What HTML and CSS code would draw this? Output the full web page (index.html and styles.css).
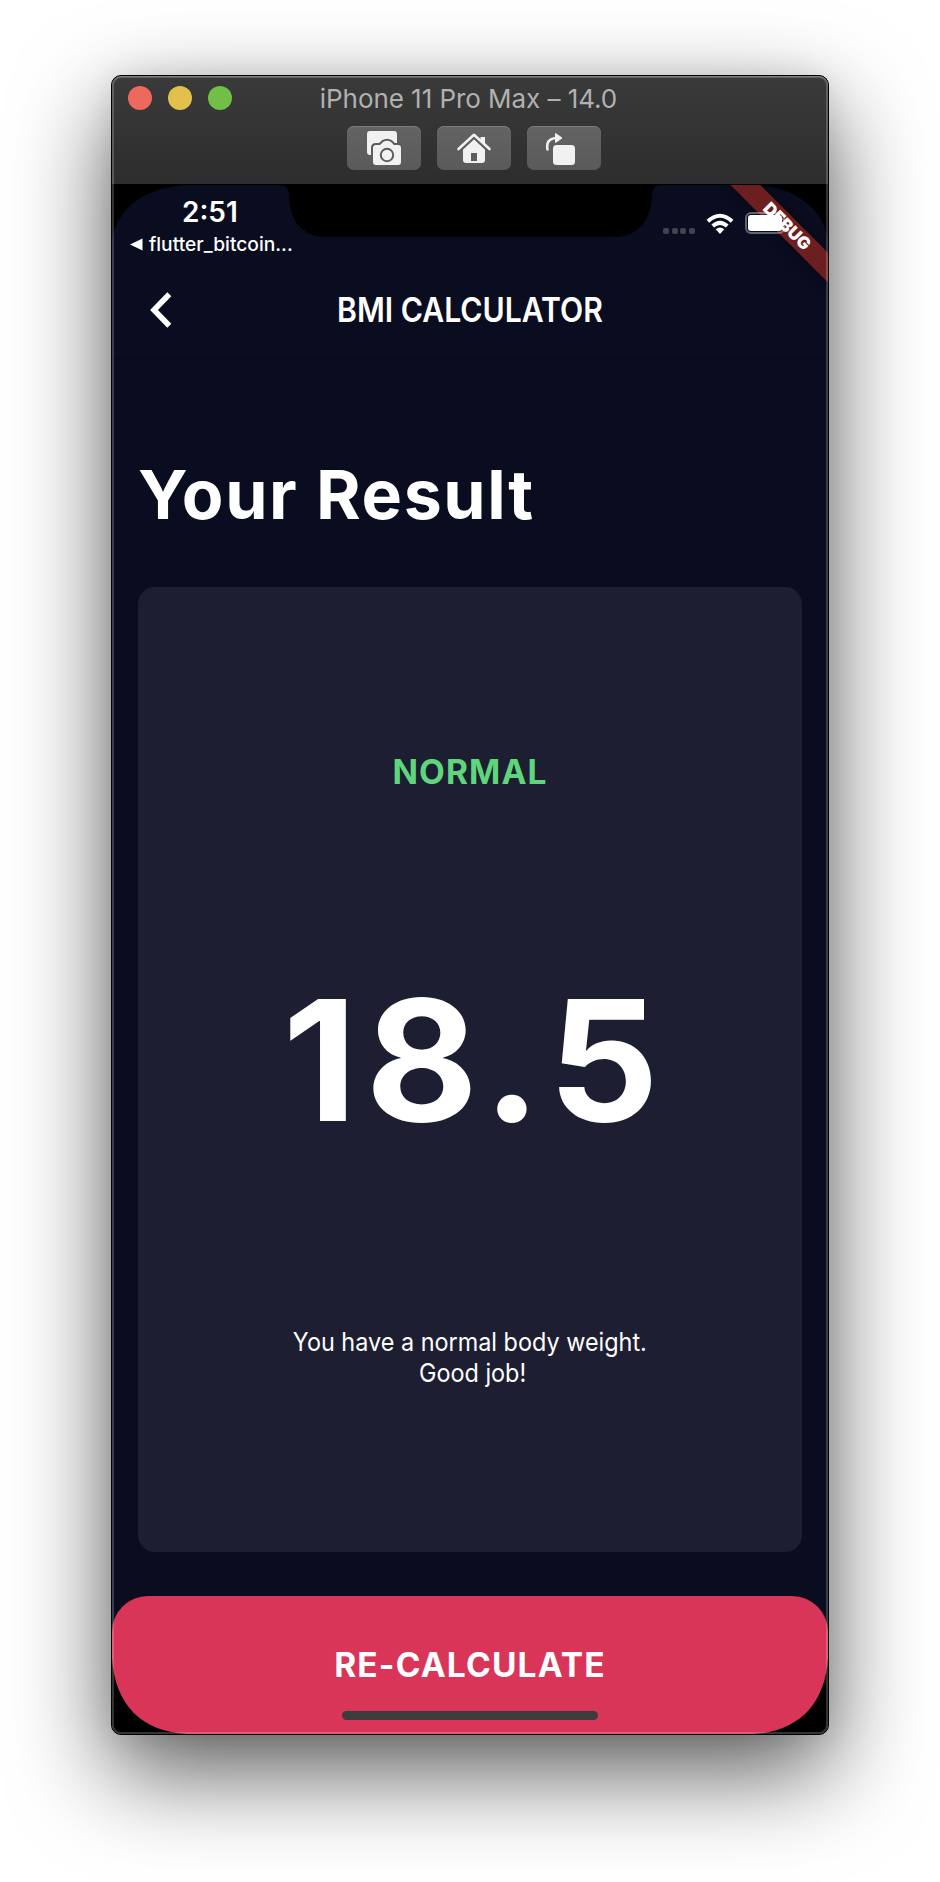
FILE: index.html
```html
<!DOCTYPE html>
<html lang="en">
<head>
<meta charset="utf-8">
<title>iPhone 11 Pro Max – 14.0</title>
<link rel="stylesheet" href="styles.css">
</head>
<body>
<main class="window">
  <header class="toolbar">
    <div class="titlebar">
      <div class="lights"><i class="light red"></i><i class="light yellow"></i><i class="light green"></i></div>
      <span class="window-title">iPhone 11 Pro Max – 14.0</span>
    </div>
    <div class="tools">
      <button class="tool" aria-label="Screenshot">
        <svg width="74" height="44" viewBox="0 0 74 44">
          <path fill="#f1f1f1" d="M23 5h24q3 0 3 3v14H24v7h-1q-3 0-3-3V8q0-3 3-3z"/>
          <path fill="#f1f1f1" stroke="#5c5c5c" stroke-width="4" paint-order="stroke" d="M29 19h4l3-3q4-2.500 8 0l3 3h4q3 0 3 3v14q0 3-3 3H29q-3 0-3-3V22q0-3 3-3z"/>
          <circle cx="40" cy="29" r="6.200" fill="none" stroke="#5c5c5c" stroke-width="2"/>
        </svg>
      </button>
      <button class="tool" aria-label="Home">
        <svg width="74" height="44" viewBox="0 0 74 44">
          <path fill="#f1f1f1" d="M26 22.500L37 12l11 10.500V34q0 3-3 3H29q-3 0-3-3z"/>
          <path d="M21.500 23L37 8.500 52.500 23" fill="none" stroke="#5c5c5c" stroke-width="5" transform="translate(0 1.500)"/>
          <path d="M21.500 23L37 8.800 52.500 23" fill="none" stroke="#f1f1f1" stroke-width="2.600" stroke-linecap="round" stroke-linejoin="round"/>
          <path fill="#f1f1f1" d="M43.500 11h4.500v8l-4.500-4z"/>
          <rect x="34" y="27" width="6" height="8" fill="#5c5c5c"/>
        </svg>
      </button>
      <button class="tool" aria-label="Rotate">
        <svg width="74" height="44" viewBox="0 0 74 44">
          <rect x="26" y="19" width="22" height="20" rx="3.500" fill="#f1f1f1"/>
          <path d="M20.500 23.500Q18.500 13 29 12" fill="none" stroke="#f1f1f1" stroke-width="2.600" stroke-linecap="round"/>
          <path d="M28.500 7.500L35 12l-6.500 4.500z" fill="#f1f1f1" stroke="#f1f1f1" stroke-linejoin="round"/>
        </svg>
      </button>
    </div>
  </header>
  <section class="screen">
    <div class="status">
      <div class="status-left">
        <span class="clock">2:51</span>
        <span class="back-app"><svg width="13" height="13" viewBox="0 0 13 13"><path d="M0 6.500L12.500 .5v12z" fill="#fff"/></svg><span class="back-name">flutter_bitcoin...</span></span>
      </div>
      <div class="status-right">
        <div class="dots"><i></i><i></i><i></i><i></i></div>
        <svg class="wifi" width="28" height="22" viewBox="0 0 28 22" fill="none" stroke="#fff" stroke-width="4">
          <path d="M1.900 8.300Q14-2.800 26.100 8.300"/><path d="M6.700 13.100Q14 6.600 21.300 13.100"/><path d="M9.700 16.300Q14 12.800 18.300 16.300L14 21z" fill="#fff" stroke="none"/>
        </svg>
        <div class="battery"><i></i></div>
      </div>
    </div>
    <div class="appbar">
      <svg width="22" height="36" viewBox="0 0 22 36"><path d="M19.300 2.200L4 18 19.300 33.800" fill="none" stroke="#fff" stroke-width="5.600"/></svg>
      <h1 class="app-title">BMI CALCULATOR</h1>
    </div>
    <div class="heading"><h2>Your Result</h2></div>
    <article class="card">
      <strong class="verdict">NORMAL</strong>
      <span class="score">18.5</span>
      <p class="advice">You have a normal body weight.<br><span class="praise">Good job!</span></p>
    </article>
    <button class="recalc"><span>RE-CALCULATE</span><i class="home-bar"></i></button>
    <svg class="bezel" width="716" height="1550" viewBox="0 0 716 1550">
      <path d="M0 0H716V57C711 22 680 1 635 1H549Q540 1 540 11C540 36 526 53 502 53H214C190 53 177 36 177 11Q177 1 168 1H81C36 1 5 22 0 57z"/>
      <path d="M0 1474C3 1521 30 1548 76 1550H0zM716 1474C713 1521 686 1548 640 1550H716z"/>
    </svg>
    <div class="ribbon-clip"><div class="ribbon">DEBUG</div></div>
  </section>
  <div class="glass-edge"></div>
</main>
</body>
</html>
```
FILE: styles.css
```css
* { box-sizing: border-box; }
body {
  margin: 0;
  height: 1882px;
  padding: 75px 111px 0;
  overflow: hidden;
  background: #fff;
  font-family: Inter, "Liberation Sans", sans-serif;
  color: #fff;
}
button { border: 0; padding: 0; font: inherit; color: inherit; }
h1, h2, p { margin: 0; }
.window {
  position: relative;
  width: 718px;
  height: 1660px;
  border: 1px solid #000;
  border-radius: 10px;
  background: #000;
  box-shadow: 0 36px 96px rgba(0, 0, 0, .66), 0 0 30px rgba(0, 0, 0, .08);
}
.glass-edge {
  position: absolute;
  inset: 0;
  border-radius: 9px;
  box-shadow: inset 0 0 0 2px rgba(255, 255, 255, .2), inset 0 1px 0 rgba(255, 255, 255, .2);
  pointer-events: none;
}
.toolbar {
  height: 108px;
  border-radius: 9px 9px 0 0;
  background: linear-gradient(#3a3a3a, #2d2d2d);
}
.titlebar { position: relative; height: 44px; display: flex; align-items: center; justify-content: center; padding-right: 3px; }
.lights { position: absolute; left: 16px; top: 10px; display: flex; gap: 16px; }
.light { width: 24px; height: 24px; border-radius: 50%; }
.red { background: #ed695e; }
.yellow { background: #e1c04c; }
.green { background: #71bf46; }
.window-title { font-size: 26px; color: #b1b1b1; letter-spacing: -.05px; white-space: nowrap; }
.tools { display: flex; justify-content: center; gap: 16px; padding: 6px 0 0 8px; }
.tool {
  width: 74px;
  height: 44px;
  border-radius: 7px;
  background: linear-gradient(#636363, #5a5a5a);
  box-shadow: inset 0 1px #7b7b7b;
}
.tool svg { display: block; }
.screen {
  position: relative;
  height: 1550px;
  display: flex;
  flex-direction: column;
  background: #0a0d20;
  border-radius: 0 0 9px 9px;
  overflow: hidden;
}
.status { height: 88px; display: flex; justify-content: space-between; }
.status-left { padding: 11px 0 0 18px; width: 200px; display: flex; flex-direction: column; }
.clock { font-size: 28px; line-height: 34px; font-weight: 600; padding-left: 52px; }
.back-app { display: flex; align-items: center; gap: 6px; margin-top: 3px; height: 24px; }
.back-name { font-size: 19.2px; font-weight: 500; white-space: nowrap; }
.status-right { position: relative; z-index: 2; display: flex; align-items: flex-start; padding-right: 43px; }
.dots { display: flex; gap: 2.7px; padding-top: 44px; }
.dots i { width: 6px; height: 6px; border-radius: 2px; background: #41434f; }
.wifi { margin: 29px 11px 0; }
.battery { width: 40px; height: 22px; margin-top: 28px; border: 2px solid rgba(255, 255, 255, .36); border-radius: 6px; padding: 1px; }
.battery i { display: block; height: 100%; background: #fff; border-radius: 3px; }
.appbar {
  position: relative;
  height: 86px;
  display: flex;
  align-items: center;
  padding: 0 0 10px 38px;
  box-shadow: 0 1px 2px rgba(0, 0, 0, .2);
}
.app-title {
  position: absolute;
  inset: 0 0 11px 0;
  display: flex;
  align-items: center;
  justify-content: center;
  font-size: 33.5px;
  font-weight: 600;
  transform: scaleX(.9);
}
.heading { height: 229px; display: flex; padding: 96px 0 0 26px; }
h2 { font-size: 68px; line-height: 80px; font-weight: 700; letter-spacing: 1.6px; white-space: nowrap; }
.card {
  margin: 0 26px 44px;
  height: 965px;
  border-radius: 17px;
  background: #1d1e31;
  display: flex;
  flex-direction: column;
  align-items: center;
  padding-top: 163px;
}
.verdict { font-size: 33.5px; line-height: 44px; font-weight: 700; letter-spacing: 1.1px; color: #5fd67c; }
.score { font-size: 168px; line-height: 200px; font-weight: 700; letter-spacing: 8.2px; padding-left: 9px; margin-top: 166px; white-space: nowrap; transform: scaleX(1.03); }
.advice { font-size: 25.5px; line-height: 31px; text-align: center; margin-top: 166px; white-space: nowrap; transform: scaleX(.918); }
.praise { padding-left: 6px; }
.recalc {
  height: 138px;
  border-radius: 36px 36px 0 0;
  background: #d93558;
  display: flex;
  flex-direction: column;
  align-items: center;
  padding-top: 49px;
}
.recalc span { font-size: 33.5px; line-height: 40px; font-weight: 700; letter-spacing: 1.15px; }
.home-bar { width: 256px; height: 9px; margin-top: 26px; border-radius: 5px; background: #3c3c3c; }
.bezel { position: absolute; inset: 0; }
.ribbon-clip { position: absolute; top: 1px; right: 0; width: 110px; height: 110px; overflow: hidden; pointer-events: none; }
.ribbon {
  position: absolute;
  left: -31px;
  top: 31px;
  width: 200px;
  height: 20.5px;
  line-height: 20.5px;
  text-align: center;
  font-size: 17px;
  font-weight: 900;
  background: rgba(118, 32, 32, .92);
  box-shadow: 0 0 12px rgba(0, 0, 0, .5);
  transform: rotate(45deg);
}
```
